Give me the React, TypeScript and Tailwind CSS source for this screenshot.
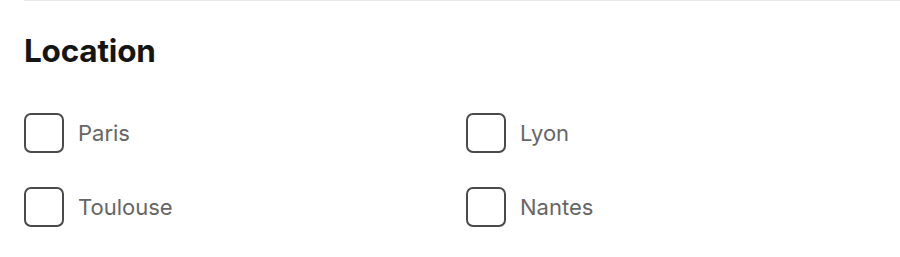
import { useState } from "react";

const cities = ["Paris", "Lyon", "Toulouse", "Nantes"];

const CityCheckbox = ({ label }: { label: string }) => {
  const [checked, setChecked] = useState(false);

  return (
    <label className="flex items-center gap-[14px] cursor-pointer">
      <input
        checked={checked}
        className="appearance-none w-10 h-10 rounded-[7px] border-2 border-[#4a4a4a] bg-white checked:bg-[#4a4a4a]"
        onChange={() => setChecked(!checked)}
        type="checkbox"
      />
      <span className="text-[22px] text-[#666666]">{label}</span>
    </label>
  );
};

const App = () => {
  return (
    <main className="w-[900px] h-[257px] bg-white font-['Inter','Helvetica',sans-serif]">
      <div className="ml-6 border-t border-[#e8e8e8] pt-8">
        <h2 className="text-[31.5px] leading-9 font-bold text-[#151515] tracking-[-0.2px]">Location</h2>

        <div className="mt-11 grid grid-cols-[442px_1fr] gap-y-[34px]">
          {cities.map((city) => (
            <CityCheckbox key={city} label={city} />
          ))}
        </div>
      </div>
    </main>
  );
};

export default App;
